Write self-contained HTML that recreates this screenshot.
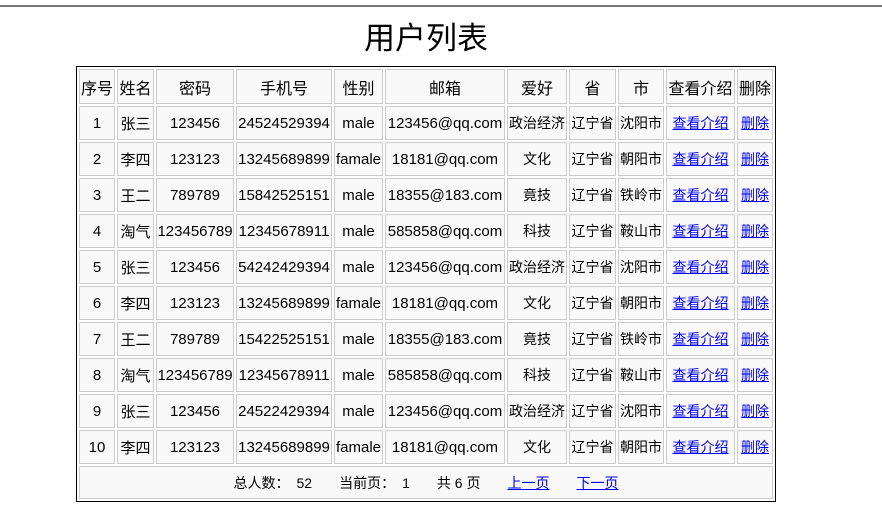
<!DOCTYPE html>
<html><head><meta charset="utf-8"><style>
body{margin:0;width:882px;height:531px;background:#fff;font-family:"Liberation Sans","Noto Sans CJK SC",sans-serif;color:#000;position:relative;overflow:hidden}
.line{position:absolute;left:0;top:5px;width:882px;height:2px;background:#777}
h1{position:absolute;left:76px;top:19px;width:700px;margin:0;text-align:center;font-weight:normal;font-size:31px;line-height:40px}
table{position:absolute;left:76px;top:66px;width:700px;border:1px solid #000;border-collapse:separate;border-spacing:2px;table-layout:fixed}
td,th{border:1px solid #ccc;background:#f9f9f9;text-align:center;padding:0;height:32px;font-size:15px;font-weight:normal;white-space:nowrap;overflow:hidden}
th{font-size:16px;height:33px}
td.s{font-size:14px}
a{color:#00e;text-decoration:underline}
.f td{font-size:14px;height:31px}
.g{display:inline-block;width:27px}
.h{display:inline-block;width:7px}
</style></head><body>
<div class="line"></div>
<h1>用户列表</h1>
<table>
<colgroup><col style="width:36px"><col style="width:37px"><col style="width:78px"><col style="width:96px"><col style="width:49px"><col style="width:120px"><col style="width:60px"><col style="width:47px"><col style="width:46px"><col style="width:69px"><col style="width:36px"></colgroup>
<tr><th>序号</th><th>姓名</th><th>密码</th><th>手机号</th><th>性别</th><th>邮箱</th><th>爱好</th><th>省</th><th>市</th><th>查看介绍</th><th>删除</th></tr>
<tr><td>1</td><td>张三</td><td>123456</td><td>24524529394</td><td>male</td><td>123456@qq.com</td><td class="s">政治经济</td><td class="s">辽宁省</td><td class="s">沈阳市</td><td class="s"><a>查看介绍</a></td><td class="s"><a>删除</a></td></tr>
<tr><td>2</td><td>李四</td><td>123123</td><td>13245689899</td><td>famale</td><td>18181@qq.com</td><td class="s">文化</td><td class="s">辽宁省</td><td class="s">朝阳市</td><td class="s"><a>查看介绍</a></td><td class="s"><a>删除</a></td></tr>
<tr><td>3</td><td>王二</td><td>789789</td><td>15842525151</td><td>male</td><td>18355@183.com</td><td class="s">竟技</td><td class="s">辽宁省</td><td class="s">铁岭市</td><td class="s"><a>查看介绍</a></td><td class="s"><a>删除</a></td></tr>
<tr><td>4</td><td>淘气</td><td>123456789</td><td>12345678911</td><td>male</td><td>585858@qq.com</td><td class="s">科技</td><td class="s">辽宁省</td><td class="s">鞍山市</td><td class="s"><a>查看介绍</a></td><td class="s"><a>删除</a></td></tr>
<tr><td>5</td><td>张三</td><td>123456</td><td>54242429394</td><td>male</td><td>123456@qq.com</td><td class="s">政治经济</td><td class="s">辽宁省</td><td class="s">沈阳市</td><td class="s"><a>查看介绍</a></td><td class="s"><a>删除</a></td></tr>
<tr><td>6</td><td>李四</td><td>123123</td><td>13245689899</td><td>famale</td><td>18181@qq.com</td><td class="s">文化</td><td class="s">辽宁省</td><td class="s">朝阳市</td><td class="s"><a>查看介绍</a></td><td class="s"><a>删除</a></td></tr>
<tr><td>7</td><td>王二</td><td>789789</td><td>15422525151</td><td>male</td><td>18355@183.com</td><td class="s">竟技</td><td class="s">辽宁省</td><td class="s">铁岭市</td><td class="s"><a>查看介绍</a></td><td class="s"><a>删除</a></td></tr>
<tr><td>8</td><td>淘气</td><td>123456789</td><td>12345678911</td><td>male</td><td>585858@qq.com</td><td class="s">科技</td><td class="s">辽宁省</td><td class="s">鞍山市</td><td class="s"><a>查看介绍</a></td><td class="s"><a>删除</a></td></tr>
<tr><td>9</td><td>张三</td><td>123456</td><td>24522429394</td><td>male</td><td>123456@qq.com</td><td class="s">政治经济</td><td class="s">辽宁省</td><td class="s">沈阳市</td><td class="s"><a>查看介绍</a></td><td class="s"><a>删除</a></td></tr>
<tr><td>10</td><td>李四</td><td>123123</td><td>13245689899</td><td>famale</td><td>18181@qq.com</td><td class="s">文化</td><td class="s">辽宁省</td><td class="s">朝阳市</td><td class="s"><a>查看介绍</a></td><td class="s"><a>删除</a></td></tr>
<tr class="f"><td colspan="11">总人数：<span class="h"></span>52<span class="g"></span>当前页：<span class="h"></span>1<span class="g"></span>共 6 页<span class="g"></span><a>上一页</a><span class="g"></span><a>下一页</a></td></tr>
</table>
</body></html>
